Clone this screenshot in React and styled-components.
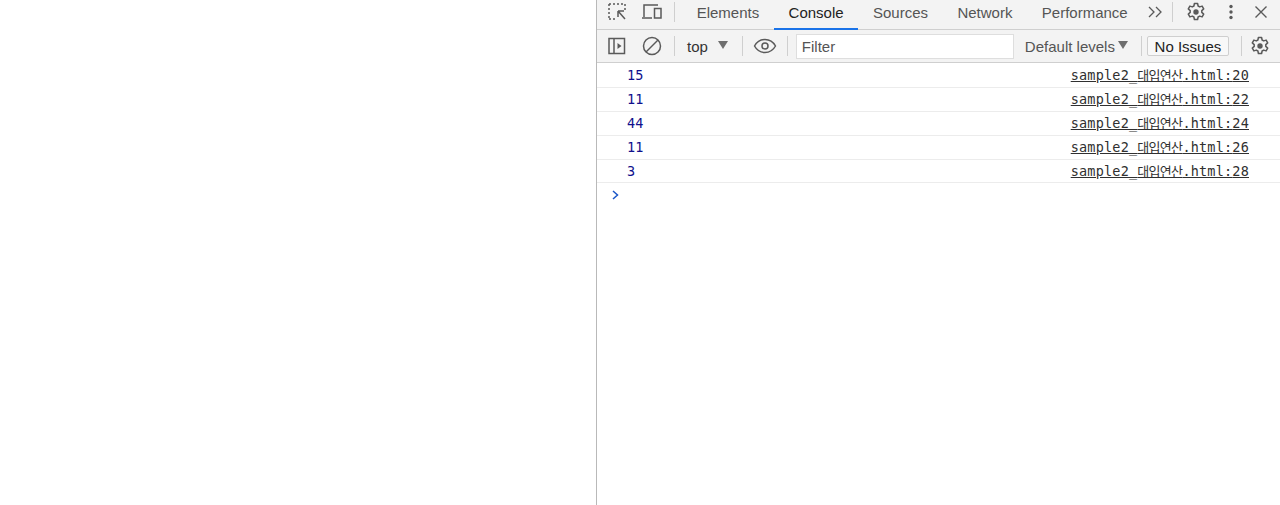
import React from "react";
import styled, { createGlobalStyle } from "styled-components";

const Global = createGlobalStyle`
  html, body { margin: 0; padding: 0; height: 100%; background: #fff; overflow: hidden; }
  #root { height: 100%; }
`;

const Page = styled.div`
  display: flex;
  width: 1280px;
  height: 505px;
  font-family: "Liberation Sans", Arial, sans-serif;
`;
const Viewport = styled.div`
  width: 596px;
  flex: none;
  background: #fff;
`;
const Devtools = styled.div`
  flex: 1;
  min-width: 0;
  border-left: 1px solid #b9b9b9;
  display: flex;
  flex-direction: column;
`;
const Toolbar = styled.div`
  display: flex;
  align-items: center;
  height: ${p => p.$h}px;
  padding-bottom: ${p => p.$pb || 0}px;
  flex: none;
  box-sizing: border-box;
  background: #f3f3f3;
  border-bottom: 1px solid #cfcfcf;
`;
const IconSlot = styled.div`
  width: ${p => p.$w || 28}px;
  margin-left: ${p => p.$ml || 0}px;
  height: 24px;
  flex: none;
  display: flex;
  align-items: center;
  justify-content: center;
  color: #5a5a5a;
`;
const Divider = styled.div`
  width: 1px;
  height: 20px;
  background: #cfcfcf;
  flex: none;
  margin: 0 ${p => p.$r || 0}px 0 ${p => p.$l || 0}px;
`;
const Tab = styled.div`
  align-self: flex-start;
  height: 30px;
  box-sizing: border-box;
  padding: 0 14.7px 5px;
  display: flex;
  align-items: center;
  font-size: 15px;
  color: ${p => (p.$active ? "#222" : "#555")};
  box-shadow: ${p => (p.$active ? "inset 0 -2px 0 #1a73e8" : "none")};
`;
const Select = styled.div`
  display: flex;
  align-items: center;
  font-size: 15px;
  color: ${p => p.$color || "#333"};
  margin-left: ${p => p.$ml || 0}px;
  gap: ${p => p.$gap || 10}px;
  flex: none;
`;
const Caret = styled.span`
  width: 0;
  height: 0;
  border-left: 5px solid transparent;
  border-right: 5px solid transparent;
  border-top: 8px solid #6e6e6e;
  margin-top: -2px;
`;
const Filter = styled.div`
  width: 218px;
  height: 25px;
  box-sizing: border-box;
  background: #fff;
  border: 1px solid #dedede;
  margin-left: 8px;
  padding-left: 5px;
  display: flex;
  align-items: center;
  font-size: 15px;
  color: #555;
  flex: none;
`;
const IssuesButton = styled.div`
  width: 82px;
  height: 20px;
  box-sizing: border-box;
  border: 1px solid #cfcfcf;
  border-radius: 2px;
  background: #f8f8f8;
  display: flex;
  align-items: center;
  justify-content: center;
  font-size: 15px;
  color: #222;
  flex: none;
  margin-left: 5px;
`;
const Log = styled.div`
  flex: 1;
  background: #fff;
`;
const Row = styled.div`
  height: 24px;
  box-sizing: border-box;
  border-bottom: 1px solid #ececec;
  display: flex;
  align-items: center;
  justify-content: space-between;
  padding: 0 31px 1px 30px;
  font-family: "DejaVu Sans Mono", monospace;
  font-size: 13.5px;
  line-height: 16px;
  &:first-child { height: 25px; }
  &:nth-child(5) { height: 23px; padding-bottom: 0; }
`;
const Value = styled.span`
  color: #10108c;
`;
const Source = styled.span`
  color: #303030;
  text-decoration: underline;
  white-space: nowrap;
  letter-spacing: 0.2px;
`;
const Hangul = styled.span`
  font-family: "Noto Sans CJK KR", sans-serif;
  font-size: 13px;
  line-height: 1;
  letter-spacing: -0.7px;
`;
const Prompt = styled.div`
  height: 24px;
  padding-left: 14px;
  display: flex;
  align-items: center;
  color: #1a56c8;
`;

const G = ({ children, w = 20, h = 20 }) => (
  <svg width={w} height={h} viewBox={`0 0 ${w} ${h}`} fill="none" stroke="currentColor" strokeWidth="1.5">
    {children}
  </svg>
);
const Gear = () => (
  <G>
    <path d="M8.400 1.500h3.200l.5 2.500 1.600.9 2.400-.8 1.600 2.800-1.900 1.700v1.800l1.900 1.700-1.600 2.800-2.400-.8-1.600.9-.5 2.500H8.400l-.5-2.500-1.600-.9-2.400.8-1.600-2.800 1.900-1.700V8.600L2.300 6.900l1.600-2.800 2.400.8 1.600-.9z" strokeLinejoin="round" />
    <circle cx="10" cy="10" r="2.700" fill="currentColor" stroke="none" />
  </G>
);

const rows = [
  ["15", "20"],
  ["11", "22"],
  ["44", "24"],
  ["11", "26"],
  ["3", "28"],
];

export default function App() {
  return (
    <Page>
      <Global />
      <Viewport />
      <Devtools>
        <Toolbar $h={30} $pb={5}>
          <IconSlot $w={20} $ml={10}>
            <G>
              <path d="M2 2h16M2 2v15M18 2v6M2 17h6" strokeDasharray="2 2" />
              <path d="M11 9h6M11 9v6M11 9l7 8" />
            </G>
          </IconSlot>
          <IconSlot $w={22} $ml={14}>
            <G w={22}>
              <path d="M3 15V3h14M1 16h10" />
              <rect x="13.500" y="6.500" width="6.500" height="9.500" />
            </G>
          </IconSlot>
          <Divider $l={11} $r={7} />
          <Tab>Elements</Tab>
          <Tab $active>Console</Tab>
          <Tab>Sources</Tab>
          <Tab>Network</Tab>
          <Tab>Performance</Tab>
          <IconSlot $w={18} $ml={5}>
            <svg width="18" height="14" viewBox="0 0 18 14" fill="none" stroke="currentColor" strokeWidth="1.3">
              <path d="M2 2l5 5-5 5M9 2l5 5-5 5" />
            </svg>
          </IconSlot>
          <Divider $l={7} />
          <IconSlot $w={22} $ml={12}><Gear /></IconSlot>
          <IconSlot $w={10} $ml={19}>
            <svg width="4" height="16" viewBox="0 0 4 16" fill="currentColor">
              <circle cx="2" cy="2.500" r="1.700" />
              <circle cx="2" cy="8" r="1.700" />
              <circle cx="2" cy="13.500" r="1.700" />
            </svg>
          </IconSlot>
          <IconSlot $w={14} $ml={18}>
            <svg width="14" height="14" viewBox="0 0 14 14" stroke="currentColor" strokeWidth="1.400">
              <path d="M1.500 1.500l11 11M12.500 1.500l-11 11" />
            </svg>
          </IconSlot>
        </Toolbar>
        <Toolbar $h={33}>
          <IconSlot $w={20} $ml={10}>
            <G>
              <rect x="2" y="2.500" width="15.500" height="15" />
              <path d="M7 2.500v15" />
              <path d="M10.500 7l4 3-4 3z" fill="currentColor" stroke="none" />
            </G>
          </IconSlot>
          <IconSlot $w={22} $ml={14}>
            <G>
              <circle cx="10" cy="10" r="8.500" />
              <path d="M4 16L16 4" />
            </G>
          </IconSlot>
          <Divider $l={11} />
          <Select $ml={12}>top<Caret /></Select>
          <Divider $l={14} />
          <IconSlot $w={24} $ml={10}>
            <svg width="24" height="16" viewBox="0 0 24 16" fill="none" stroke="currentColor" strokeWidth="1.500">
              <path d="M1.500 8C4 3.500 8 1.500 12 1.500S20 3.500 22.500 8C20 12.500 16 14.500 12 14.500S4 12.500 1.500 8z" />
              <circle cx="12" cy="8" r="3" />
            </svg>
          </IconSlot>
          <Divider $l={10} />
          <Filter>Filter</Filter>
          <Select $ml={11} $gap={3} $color="#555">Default levels<Caret /></Select>
          <Divider $l={13} />
          <IssuesButton>No Issues</IssuesButton>
          <Divider $l={12} />
          <IconSlot $w={22} $ml={7}><Gear /></IconSlot>
        </Toolbar>
        <Log>
          {rows.map(([v, line], i) => (
            <Row key={i}>
              <Value>{v}</Value>
              <Source>sample2_<Hangul>대입연산</Hangul>.html:{line}</Source>
            </Row>
          ))}
          <Prompt>
            <svg width="9" height="10" viewBox="0 0 9 10" fill="none" stroke="currentColor" strokeWidth="1.500">
              <path d="M2 1l4.500 4L2 9" />
            </svg>
          </Prompt>
        </Log>
      </Devtools>
    </Page>
  );
}
